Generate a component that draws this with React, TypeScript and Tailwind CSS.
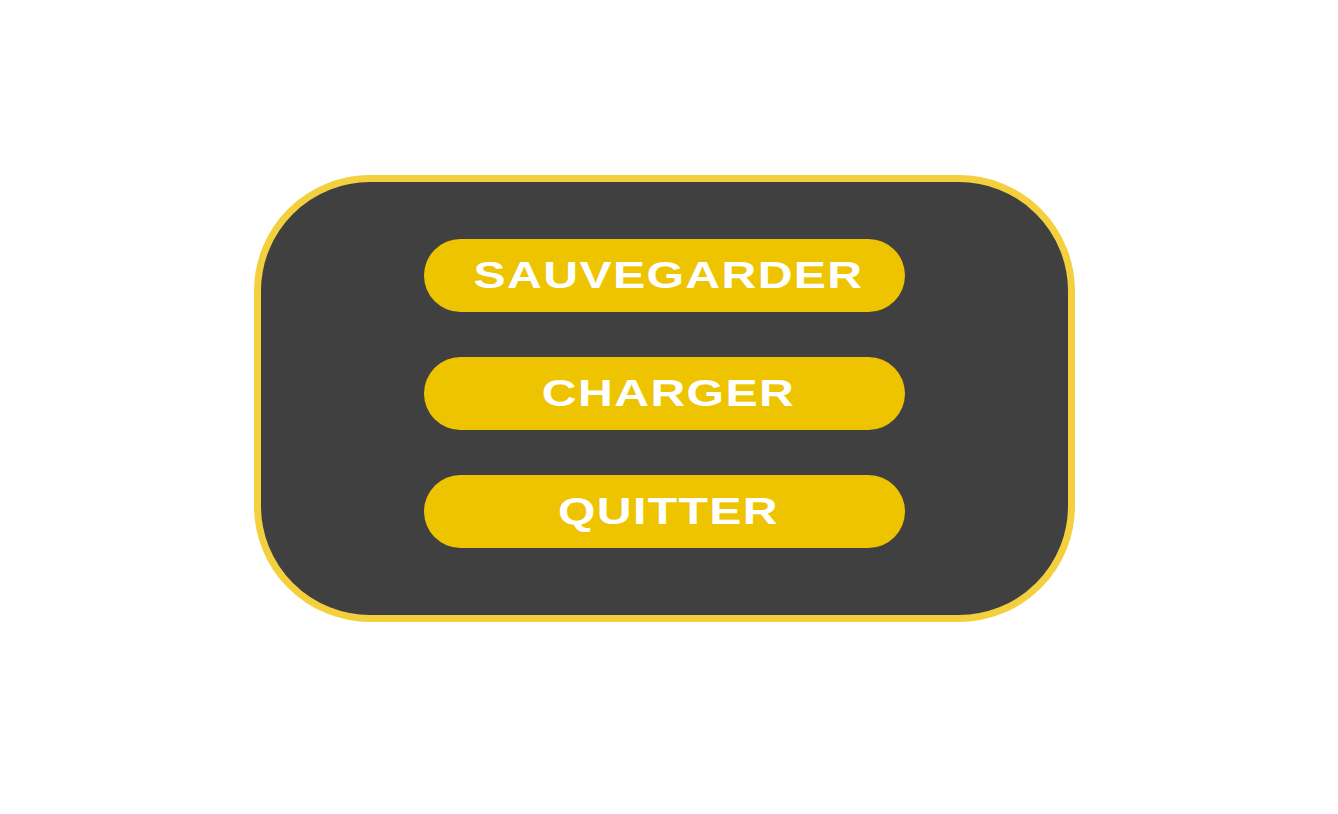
export default function App() {
  const items = ['SAUVEGARDER', 'CHARGER', 'QUITTER'];

  return (
    <div className="w-full h-[814px] bg-white flex items-start justify-start">
      <div className="ml-[254px] mt-[175px] w-[821px] h-[447px] rounded-[116px] border-[7px] border-[#f4d03f] bg-[#404040] flex flex-col items-center pt-[57px] gap-[45px]">
        {items.map((label) => (
          <button
            key={label}
            className="w-[481px] h-[73px] shrink-0 rounded-full bg-[#eec300] flex items-center justify-center pl-[8px]"
          >
            <span className="block scale-x-[1.34] text-white text-[36px] leading-none font-bold tracking-[1px] font-['Liberation_Sans',Arial,sans-serif]">
              {label}
            </span>
          </button>
        ))}
      </div>
    </div>
  );
}
